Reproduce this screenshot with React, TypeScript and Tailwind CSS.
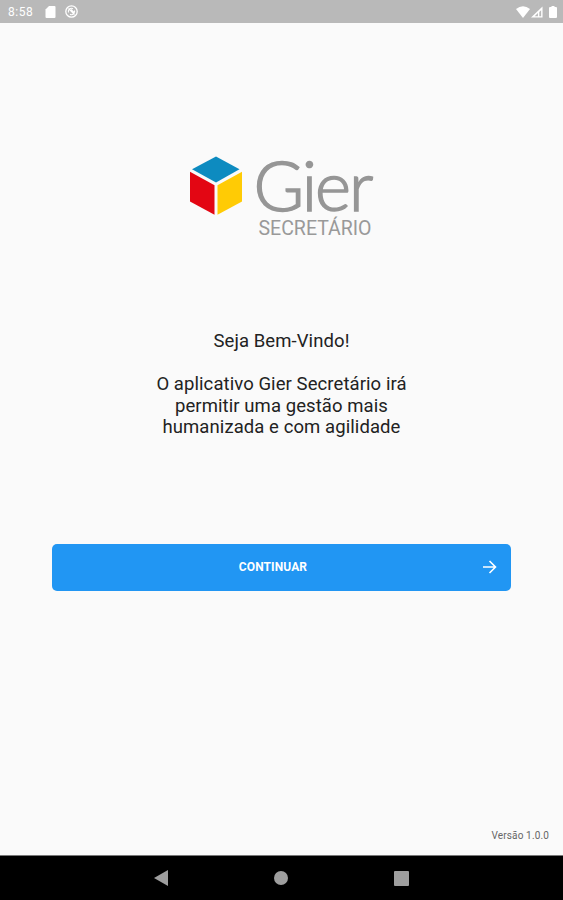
function StatusBar() {
  return (
    <header className="flex h-[23px] shrink-0 items-center justify-between bg-[#b9b9b9] pl-2 pr-[6px] text-white">
      <div className="flex items-center">
        <span className="w-[37px] pt-px text-[12px] leading-none tracking-[0.5px]">8:58</span>
        <svg width="11" height="12" viewBox="0 0 11 12" className="mt-px" fill="currentColor">
          <path d="M4 0h5.500q1 0 1 1v10q0 1-1 1h-8q-1 0-1-1V3.500z" />
        </svg>
        <svg width="13" height="13" viewBox="0 0 13 13" className="ml-[9px]" fill="none" stroke="currentColor">
          <circle cx="6.5" cy="6.5" r="5.7" strokeWidth="1.300" />
          <path d="M3.5 7.5A3.1 3.1 0 0 1 8 3.8M9.5 5.5A3.1 3.1 0 0 1 5 9.2M3.5 3.5l6 6M6 4.5l3 3" strokeWidth="1.1" />
        </svg>
      </div>
      <div className="flex items-center pt-px">
        <svg width="14" height="12" viewBox="0 0 14 12" fill="currentColor">
          <path d="M0 3Q7-2.500 14 3L7 12z" />
        </svg>
        <svg width="12" height="12" viewBox="0 0 13 12" className="ml-px" fill="currentColor">
          <path fillRule="evenodd" d="M0 12L12.500 0v12zM4 10.500h3.500V7.200zM9 10.500h2V4L9 6z" />
        </svg>
        <svg width="8" height="12" viewBox="0 0 8 12" className="ml-[6px]" fill="currentColor">
          <path d="M2.500 0h3v1H7q1 0 1 1v9q0 1-1 1H1q-1 0-1-1V2q0-1 1-1h1.500z" />
        </svg>
      </div>
    </header>
  );
}

function Logo() {
  return (
    <svg width="189" height="86" viewBox="0 0 189 86" className="ml-[3px] overflow-visible" role="img" aria-label="Gier Secretário">
      <path d="M27 0.500L50.500 13.200L27 26.500L3 13.200z" fill="#0d8bc0" />
      <path d="M1 15.800L25.500 29.300V58.700L1 45.500z" fill="#e30613" />
      <path d="M28.500 29.300L53 15.800V45.500L28.500 58.700z" fill="#ffcb05" />
      <text x="64.500" y="55" fontSize="69" fontWeight="300" fill="#969696" stroke="#969696" strokeWidth="1.500" textLength="120" lengthAdjust="spacing" className="font-['Lato',sans-serif]">
        Gier
      </text>
      <text x="69.500" y="79" fontSize="19.500" fill="#999999" textLength="113" lengthAdjust="spacingAndGlyphs" className="font-['Roboto',sans-serif]">
        SECRETÁRIO
      </text>
    </svg>
  );
}

function NavigationBar() {
  return (
    <nav className="flex h-[45px] shrink-0 items-center justify-center gap-[106px] border-t border-[#777] bg-black text-[#9e9e9e]">
      <svg width="14" height="16" viewBox="0 0 14 16" fill="currentColor">
        <path d="M14 0v16L0 8z" />
      </svg>
      <div className="size-[14px] rounded-full bg-[#9e9e9e]" />
      <div className="size-[15px] rounded-[1px] bg-[#9e9e9e]" />
    </nav>
  );
}

export default function App() {
  return (
    <div className="flex h-[900px] w-[563px] flex-col overflow-hidden bg-[#fafafa] font-['Roboto',sans-serif]">
      <StatusBar />
      <main className="flex flex-1 flex-col items-center pt-[133px]">
        <Logo />
        <div className="mt-[89px] text-center text-[18.500px] leading-[21.500px] tracking-[0.080px] text-[#222]">
          <h1>Seja Bem-Vindo!</h1>
          <p className="mt-[21.500px]">
            O aplicativo Gier Secretário irá
            <br />
            permitir uma gestão mais
            <br />
            humanizada e com agilidade
          </p>
        </div>
        <button className="mt-[105px] flex h-[47px] w-[459px] items-center rounded-[5px] bg-[#2196f3] pr-[14px] text-white">
          <span className="flex-1 pl-[12px] text-center text-[12px] font-bold tracking-[0.1px]">CONTINUAR</span>
          <svg width="15" height="14" viewBox="0 0 15 14" fill="none" stroke="currentColor" strokeWidth="1.600">
            <path d="M1 7h12.500M7.500 1L13.500 7l-6 6" />
          </svg>
        </button>
        <p className="mb-[12px] mr-[14px] mt-auto self-end text-[10px] leading-[14px] tracking-[0.15px] text-[#666]">Versão 1.0.0</p>
      </main>
      <NavigationBar />
    </div>
  );
}
